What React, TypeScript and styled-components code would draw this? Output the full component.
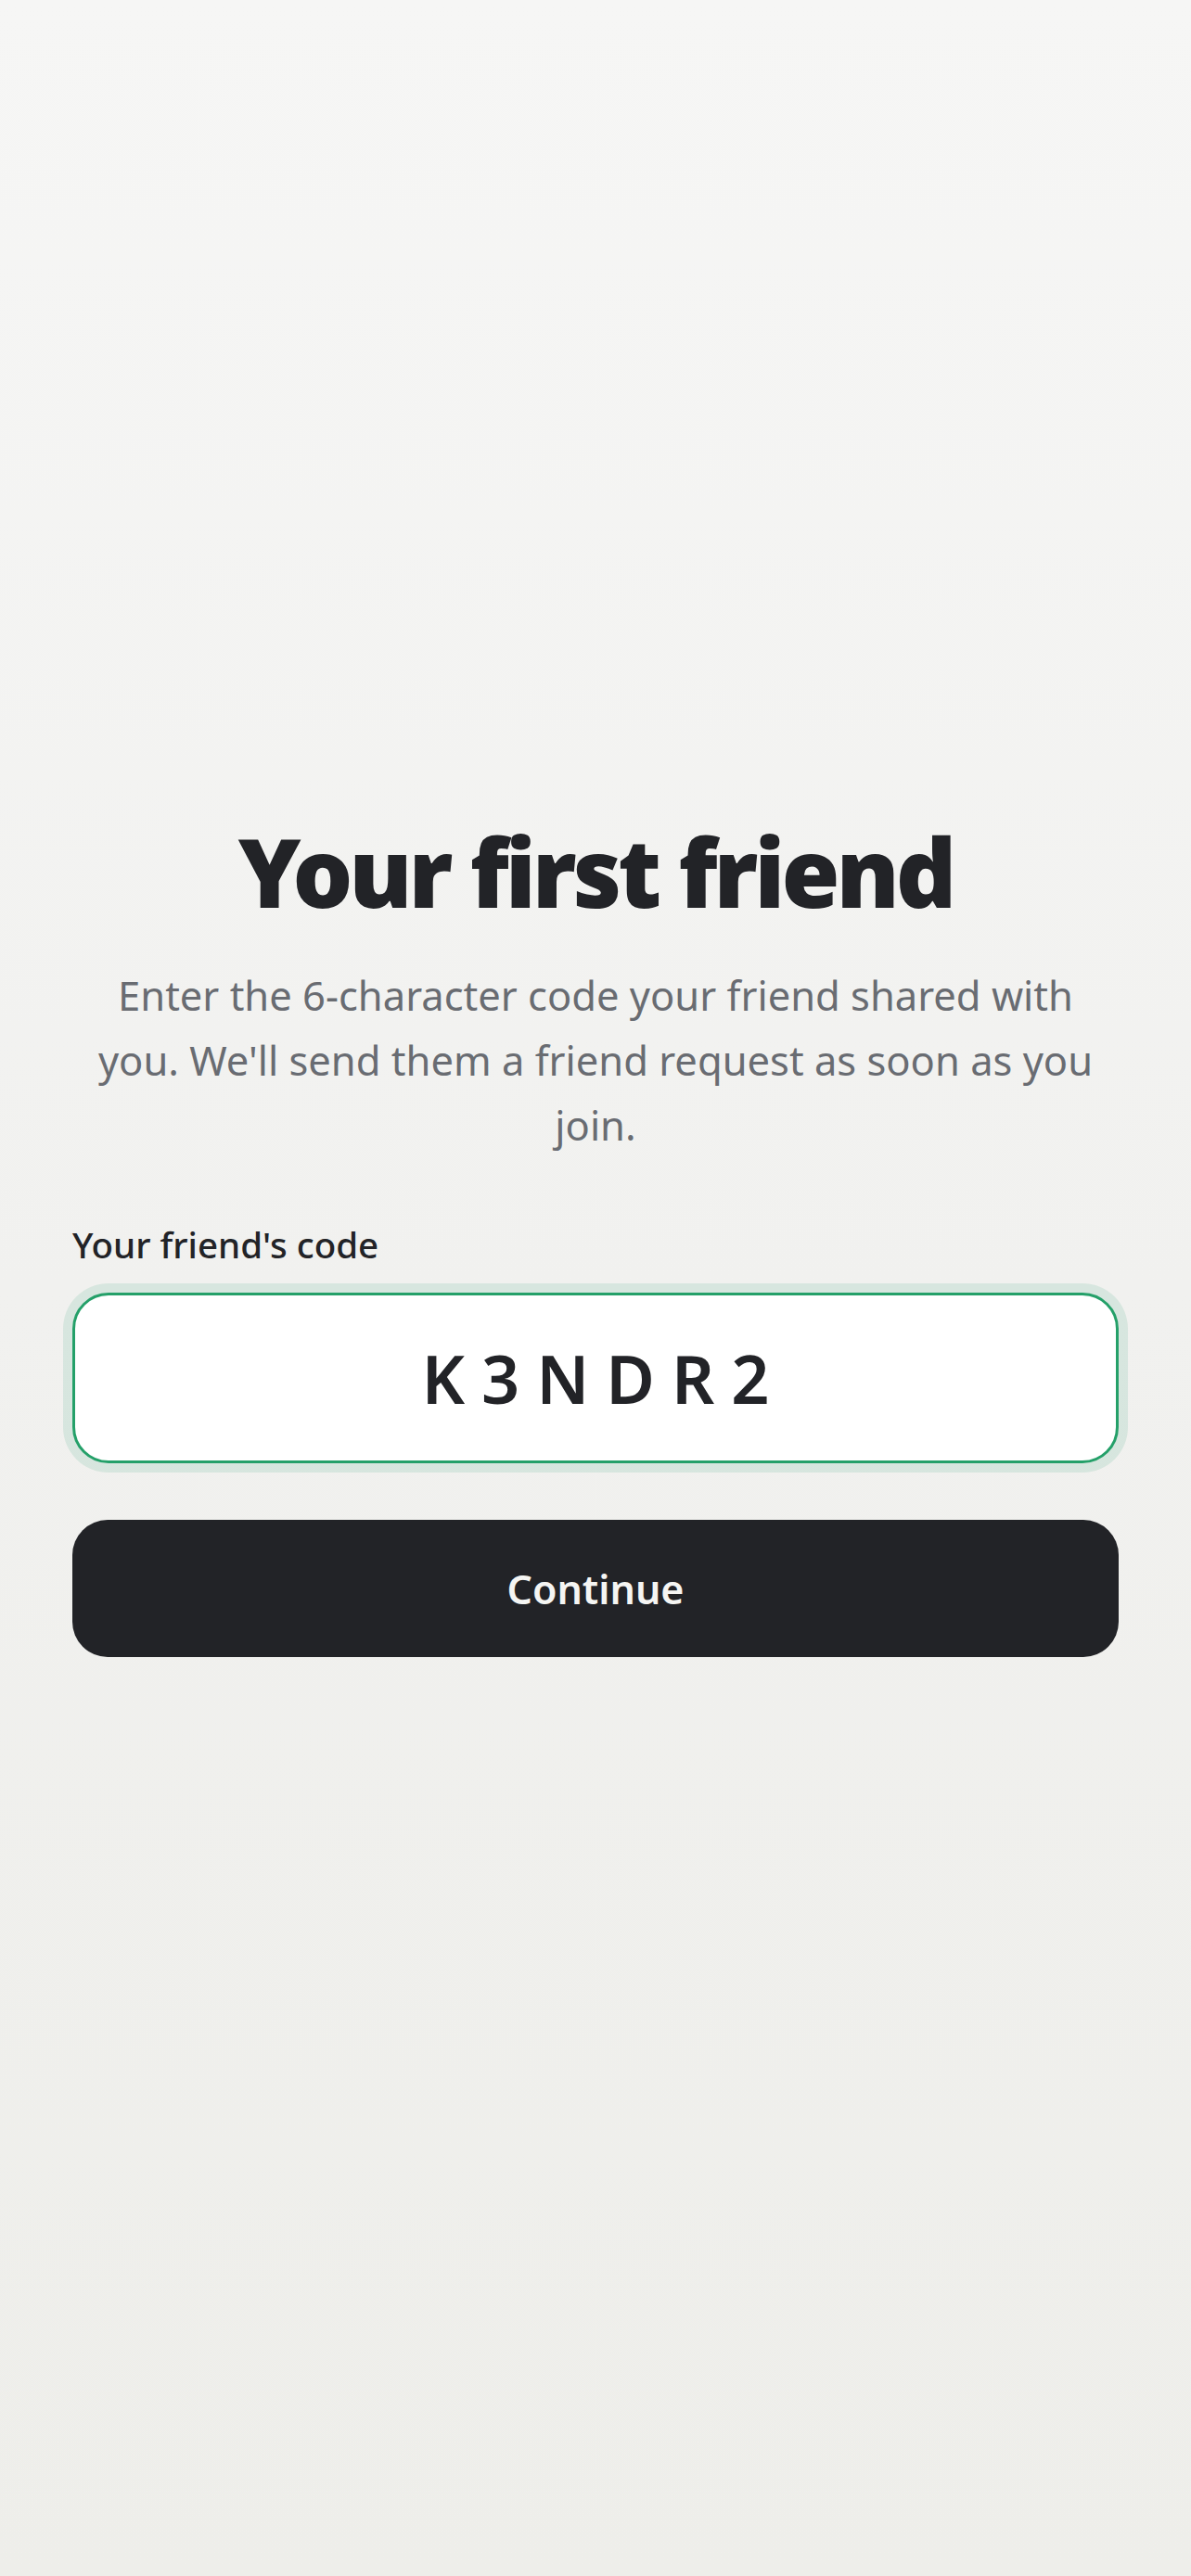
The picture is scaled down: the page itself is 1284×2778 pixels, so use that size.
import React, { useState } from 'react';
import styled, { createGlobalStyle } from 'styled-components';

const GlobalStyle = createGlobalStyle`
  * {
    box-sizing: border-box;
  }
  html, body {
    margin: 0;
    padding: 0;
  }
  body {
    font-family: 'Noto Sans', 'Open Sans', sans-serif;
    background: #f1f1ef;
    -webkit-font-smoothing: antialiased;
  }
`;

const Page = styled.main`
  min-height: 2778px;
  display: flex;
  flex-direction: column;
  padding: 884px 78px 0;
  background: linear-gradient(180deg, #f6f6f5 0%, #f1f1ef 50%, #eeeeea 100%);
`;

const Title = styled.h1`
  margin: 0;
  font-family: 'Noto Sans', sans-serif;
  font-size: 102px;
  line-height: 112px;
  font-weight: 900;
  letter-spacing: -0.04em;
  text-align: center;
  color: #222327;
`;

const Lead = styled.p`
  margin: 42px 0 0;
  padding: 0 4px;
  font-size: 43.5px;
  line-height: 70px;
  font-weight: 400;
  text-align: center;
  color: #696c72;
`;

const Field = styled.label`
  display: flex;
  flex-direction: column;
  gap: 22px;
  margin-top: 65px;
`;

const FieldLabel = styled.span`
  font-size: 38.5px;
  line-height: 59px;
  font-weight: 500;
  color: #222327;
`;

const CodeInput = styled.input`
  width: 100%;
  height: 184px;
  border: 3px solid #24a069;
  border-radius: 39px;
  background: #ffffff;
  box-shadow: 0 0 0 10px rgba(36, 160, 105, 0.12);
  outline: none;
  font-family: 'Noto Sans', sans-serif;
  font-size: 72px;
  font-weight: 600;
  letter-spacing: 0.25em;
  text-indent: 0.25em;
  text-align: center;
  text-transform: uppercase;
  color: #222327;
`;

const PrimaryButton = styled.button`
  margin-top: 61px;
  width: 100%;
  height: 148px;
  border: none;
  border-radius: 38px;
  background: #222327;
  color: #f5f5f3;
  font-family: 'Noto Sans', sans-serif;
  font-size: 43px;
  font-weight: 600;
  cursor: pointer;
`;

const App = () => {
  const [code, setCode] = useState('K3NDR2');

  return (
    <>
      <GlobalStyle />
      <Page>
        <Title>Your first friend</Title>
        <Lead>
          Enter the 6-character code your friend shared with you. We'll send them a friend
          request as soon as you join.
        </Lead>
        <Field>
          <FieldLabel>Your friend's code</FieldLabel>
          <CodeInput
            value={code}
            maxLength={6}
            onChange={e => setCode(e.target.value.toUpperCase())}
          />
        </Field>
        <PrimaryButton type="button">Continue</PrimaryButton>
      </Page>
    </>
  );
};

export default App;
